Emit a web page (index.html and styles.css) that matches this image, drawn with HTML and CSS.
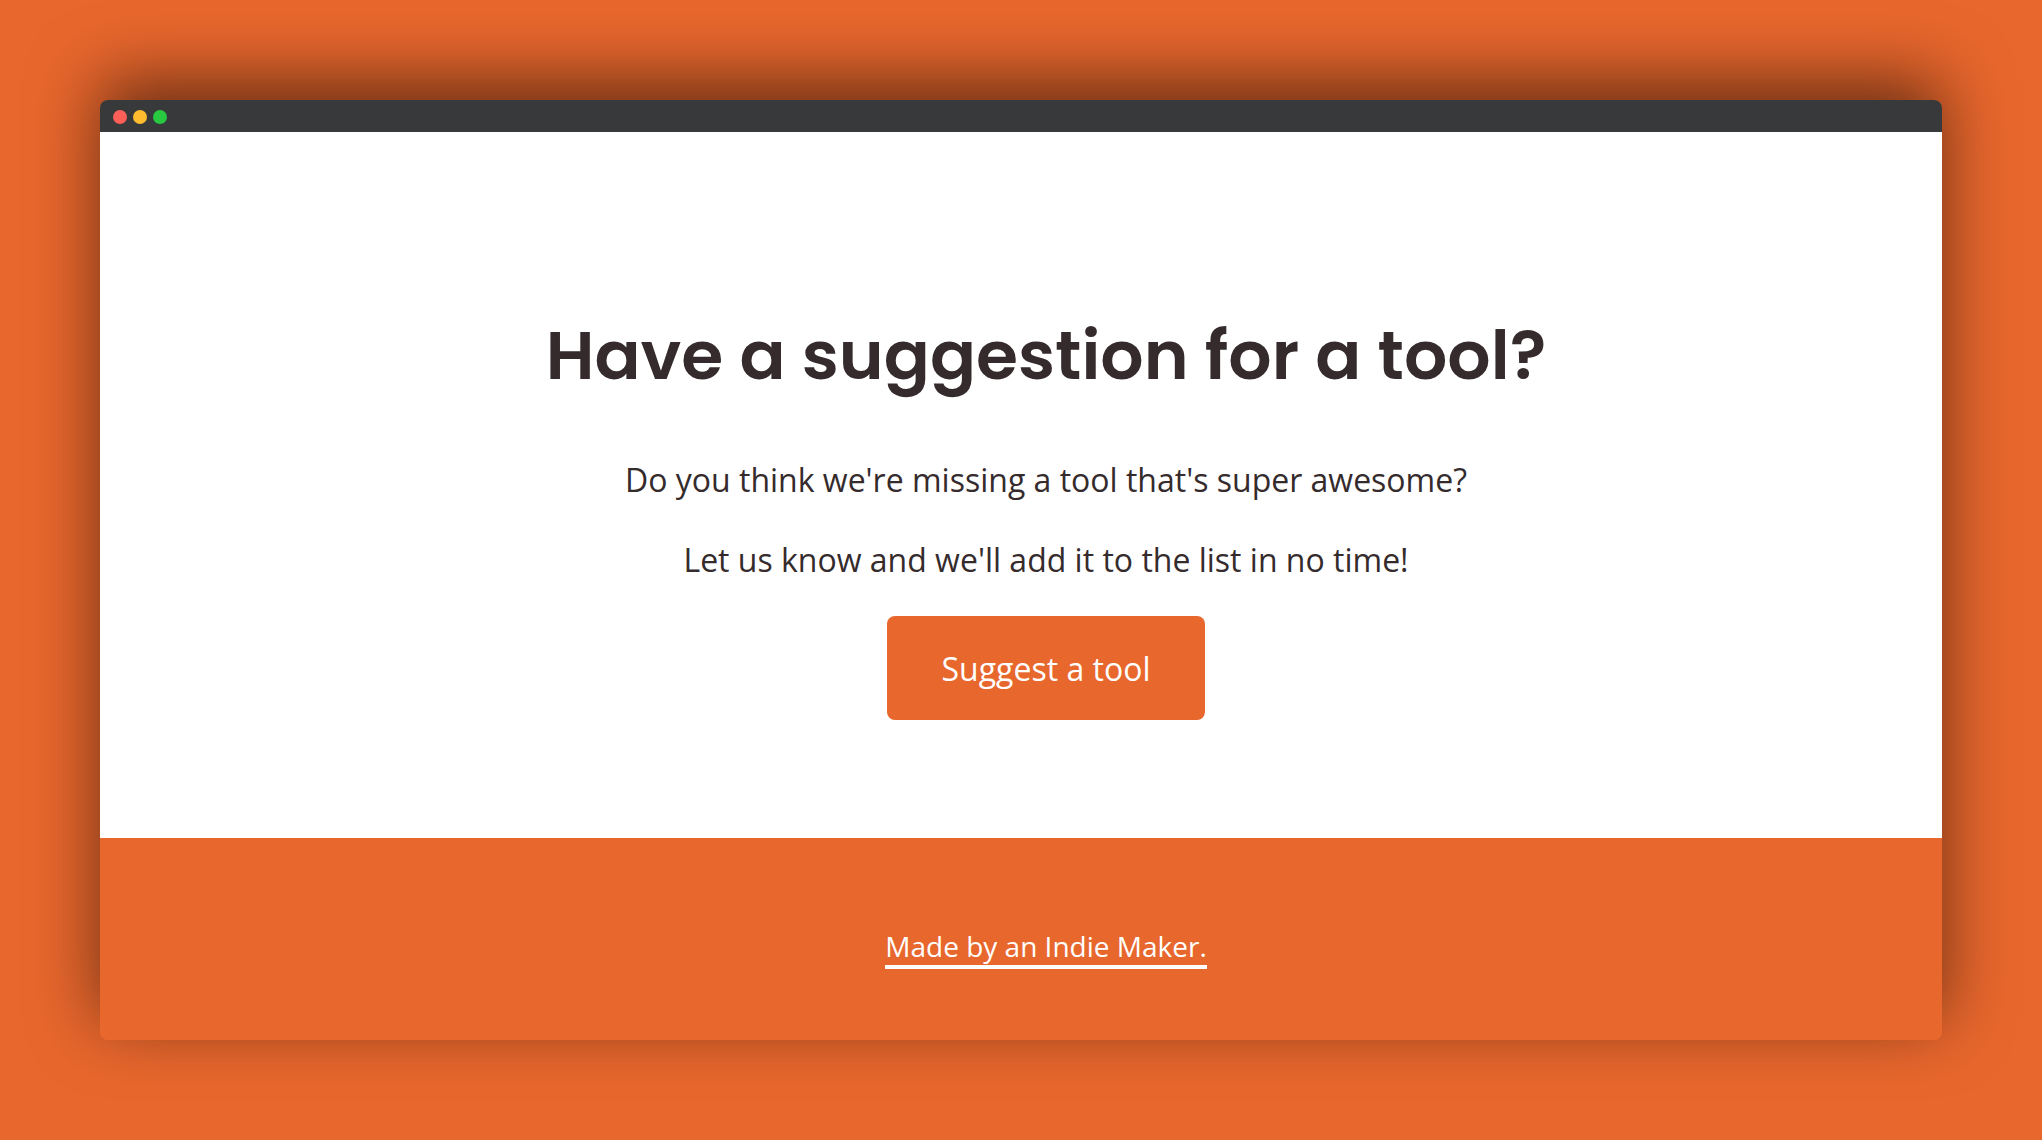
FILE: index.html
```html
<!DOCTYPE html>
<html lang="en">
<head>
<meta charset="utf-8">
<meta name="viewport" content="width=device-width, initial-scale=1">
<title>Suggest a tool</title>
<link rel="stylesheet" href="styles.css">
</head>
<body>
<div class="window">
  <header class="titlebar">
    <span class="dot dot-close"></span>
    <span class="dot dot-minimize"></span>
    <span class="dot dot-zoom"></span>
  </header>
  <main class="suggest">
    <h1 class="title">Have a suggestion for a tool?</h1>
    <p class="text">Do you think we're missing a tool that's super awesome?</p>
    <p class="text">Let us know and we'll add it to the list in no time!</p>
    <button class="button" type="button">Suggest a tool</button>
  </main>
  <footer class="footer">
    <a class="credit" href="#">Made by an Indie Maker.</a>
  </footer>
</div>
</body>
</html>
```
FILE: styles.css
```css
* {
  box-sizing: border-box;
}

body {
  margin: 0;
  min-height: 100vh;
  padding: 100px;
  background: #e8672d;
  color: #352b2c;
  font-family: "Open Sans", sans-serif;
}

.window {
  border-radius: 8px;
  overflow: hidden;
  box-shadow: 0 -20px 68px rgba(0, 0, 0, 0.55);
}

.titlebar {
  display: flex;
  align-items: center;
  gap: 6px;
  height: 32px;
  padding: 2px 13px 0;
  background: #38393a;
}

.dot {
  width: 14px;
  height: 14px;
  border-radius: 50%;
}

.dot-close {
  background: #ff5f57;
}

.dot-minimize {
  background: #febc2e;
}

.dot-zoom {
  background: #28c840;
}

.suggest {
  display: flex;
  flex-direction: column;
  align-items: center;
  padding: 170px 0 118px 50px;
  background: #fff;
}

.title {
  margin: 0 0 38px;
  font-family: Poppins, "Open Sans", sans-serif;
  font-size: 68px;
  font-weight: 600;
  line-height: 108px;
}

.text {
  margin: 0;
  font-size: 32px;
  line-height: 64px;
}

.text + .text {
  margin: 16px 0 24px;
}

.button {
  height: 104px;
  padding: 0 55px;
  border: 0;
  border-radius: 8px;
  background: #e8672d;
  color: #fff;
  font: 32px "Open Sans", sans-serif;
}

.footer {
  display: flex;
  justify-content: center;
  padding: 89px 0 71px 50px;
  background: #e8672d;
}

.credit {
  border-bottom: 4px solid #fff;
  color: #fff;
  font-size: 28px;
  line-height: 38px;
  text-decoration: none;
}
```
